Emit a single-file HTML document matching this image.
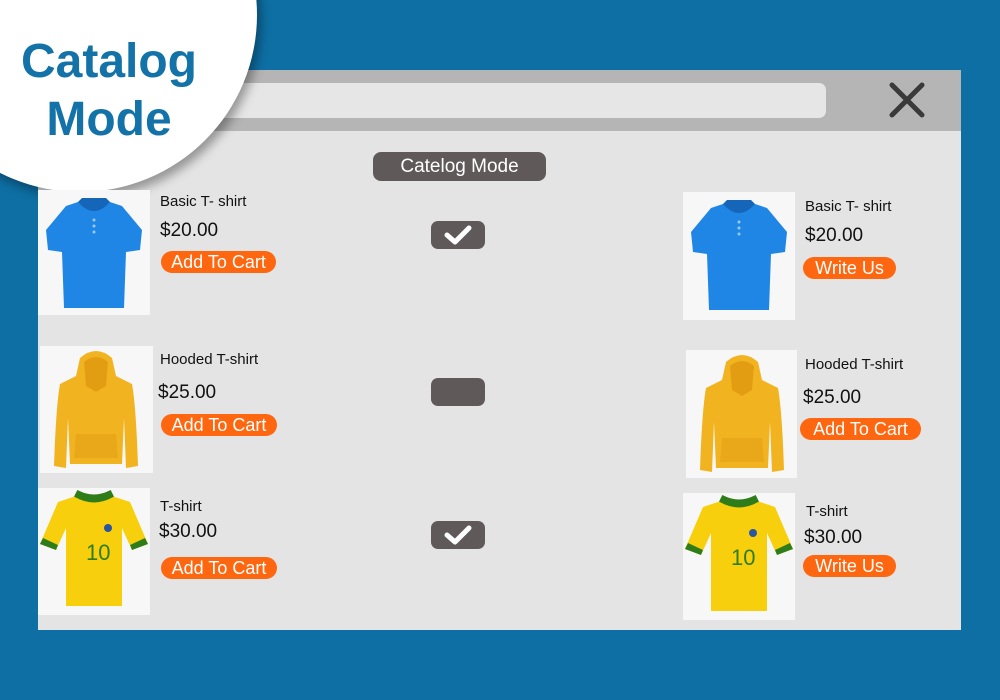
<!DOCTYPE html>
<html><head><meta charset="utf-8"><style>
*{margin:0;padding:0;box-sizing:border-box}
body{width:1000px;height:700px;background:#0e6fa4;position:relative;overflow:hidden;font-family:"Liberation Sans",sans-serif}
.a{position:absolute}
.win{left:38px;top:70px;width:923px;height:560px;background:#e4e4e4}
.bar{left:38px;top:70px;width:923px;height:61px;background:#b5b5b5}
.addr{left:150px;top:83px;width:676px;height:35px;background:#e6e6e6;border-radius:7px}
.img{background:#f7f7f7}
.n{font-size:15px;color:#111;white-space:nowrap}
.p{font-size:19px;color:#111}
.b{background:#ff6610;color:#fff;font-size:18px;border-radius:11px;height:22px;line-height:22px;text-align:center;white-space:nowrap}
.t{background:#5f5a59;border-radius:7px;width:54px;height:28px}
</style></head><body>
<div class="a win"></div>
<div class="a bar"></div>
<div class="a addr"></div>
<svg class="a" style="left:888px;top:81px" width="38" height="38" viewBox="0 0 38 38"><path d="M4 4L34 34M34 4L4 34" stroke="#3a3a3a" stroke-width="5" stroke-linecap="round"/></svg>
<div class="a" style="left:-97px;top:-162px;width:354px;height:354px;border-radius:50%;background:#fff;box-shadow:4px 6px 10px rgba(0,0,0,.35)"></div>
<div class="a" style="left:0;top:33px;width:218px;text-align:center;color:#1372a8;font-size:48px;line-height:58px;font-weight:bold">Catalog<br>Mode</div>
<div class="a" style="left:373px;top:152px;width:173px;height:29px;background:#5f5a59;border-radius:8px;color:#fff;font-size:19px;line-height:29px;text-align:center">Catelog Mode</div>

<svg width="0" height="0" style="position:absolute"><defs>
<g id="polo"><path d="M40 12L28 16L8 40L10 60L24 62L26 118L86 118L88 62L102 60L104 40L84 16L72 12Z" fill="#1f86e6"/><path d="M40 12Q56 30 72 12L68 8L44 8Z" fill="#1566b8"/><circle cx="56" cy="30" r="1.5" fill="#9cc8f3"/><circle cx="56" cy="36" r="1.5" fill="#9cc8f3"/><circle cx="56" cy="42" r="1.5" fill="#9cc8f3"/></g>
<g id="hood"><path d="M40 12Q56 -2 72 12L76 30L92 38Q96 60 98 120L86 122L84 72L82 118L30 118L28 72L26 122L14 120Q16 60 20 38L36 30Z" fill="#f2b321"/><path d="M44 16Q56 6 68 16L66 40L56 46L46 40Z" fill="#e39d12"/><path d="M36 88L76 88L78 112L34 112Z" fill="#e9a81a"/></g>
<g id="jer"><path d="M38 8L20 14L2 56L18 62L28 40L28 118L84 118L84 40L94 62L110 56L92 14L74 8Q56 18 38 8Z" fill="#f8cf0c"/><path d="M38 8Q56 18 74 8L72 4Q56 12 40 4Z" fill="#2f7d1a" stroke="#2f7d1a" stroke-width="3"/><path d="M2 56L18 62L20 57L5 50Z" fill="#2f7d1a"/><path d="M110 56L94 62L92 57L107 50Z" fill="#2f7d1a"/><text x="48" y="72" font-family="Liberation Sans Narrow,Liberation Sans,sans-serif" font-size="22" fill="#2f7d1a">10</text><circle cx="70" cy="40" r="4" fill="#2a55a0"/></g>
</defs></svg>

<svg class="a img" style="left:38px;top:190px" width="112" height="125"><use href="#polo"/></svg>
<svg class="a img" style="left:40px;top:346px" width="113" height="127"><use href="#hood"/></svg>
<svg class="a img" style="left:38px;top:488px" width="112" height="127"><use href="#jer"/></svg>
<svg class="a img" style="left:683px;top:192px" width="112" height="128"><use href="#polo"/></svg>
<svg class="a img" style="left:686px;top:350px" width="111" height="128"><use href="#hood"/></svg>
<svg class="a img" style="left:683px;top:493px" width="112" height="127"><use href="#jer"/></svg>

<div class="a n" style="left:160px;top:193px">Basic T- shirt</div>
<div class="a p" style="left:160px;top:220px">$20.00</div>
<div class="a b" style="left:161px;top:251px;width:115px">Add To Cart</div>
<div class="a n" style="left:160px;top:351px">Hooded T-shirt</div>
<div class="a p" style="left:158px;top:382px">$25.00</div>
<div class="a b" style="left:161px;top:414px;width:116px">Add To Cart</div>
<div class="a n" style="left:160px;top:498px">T-shirt</div>
<div class="a p" style="left:159px;top:521px">$30.00</div>
<div class="a b" style="left:161px;top:557px;width:116px">Add To Cart</div>

<div class="a n" style="left:805px;top:198px">Basic T- shirt</div>
<div class="a p" style="left:805px;top:225px">$20.00</div>
<div class="a b" style="left:803px;top:257px;width:93px">Write Us</div>
<div class="a n" style="left:805px;top:356px">Hooded T-shirt</div>
<div class="a p" style="left:803px;top:387px">$25.00</div>
<div class="a b" style="left:800px;top:418px;width:121px">Add To Cart</div>
<div class="a n" style="left:806px;top:503px">T-shirt</div>
<div class="a p" style="left:804px;top:527px">$30.00</div>
<div class="a b" style="left:803px;top:555px;width:93px">Write Us</div>

<div class="a t" style="left:431px;top:221px"></div>
<svg class="a" style="left:431px;top:221px" width="54" height="28"><path d="M16 14L24 21L38 7" stroke="#fff" stroke-width="5" fill="none" stroke-linecap="round" stroke-linejoin="round"/></svg>
<div class="a t" style="left:431px;top:378px"></div>
<div class="a t" style="left:431px;top:521px"></div>
<svg class="a" style="left:431px;top:521px" width="54" height="28"><path d="M16 14L24 21L38 7" stroke="#fff" stroke-width="5" fill="none" stroke-linecap="round" stroke-linejoin="round"/></svg>
</body></html>
